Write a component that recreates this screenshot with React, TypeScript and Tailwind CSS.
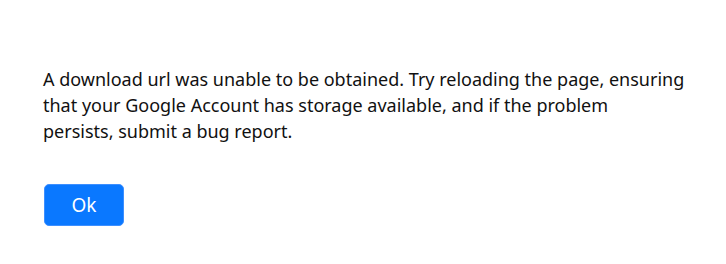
export default function App() {
  return (
    <div className="min-h-screen bg-white pl-[43px] pr-[8px] pt-[66px]" style={{ fontFamily: '"Noto Sans", sans-serif' }}>
      <p className="text-[18px] leading-[26px] text-[#111]">
        A download url was unable to be obtained. Try reloading the page, ensuring
        <br />
        that your Google Account has storage available, and if the problem
        <br />
        persists, submit a bug report.
      </p>
      <button className="mt-[40px] ml-px w-[80px] h-[42px] rounded-[5px] border border-[#3d8fff] bg-[#0a78ff] text-white text-[19px]">
        Ok
      </button>
    </div>
  );
}
